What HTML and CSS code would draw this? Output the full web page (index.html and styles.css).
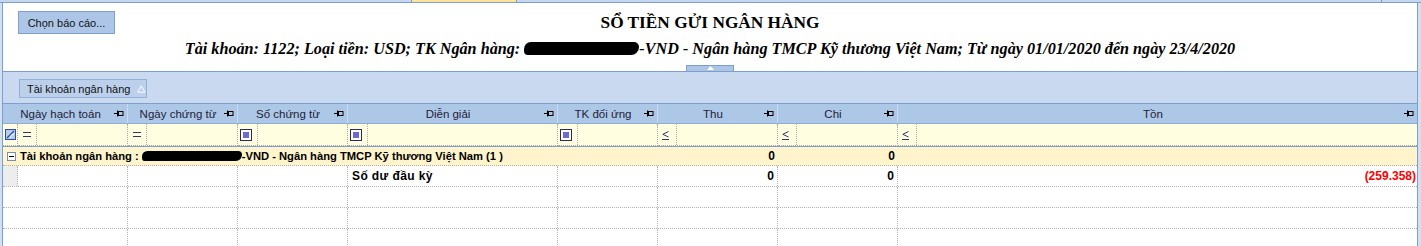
FILE: index.html
```html
<!DOCTYPE html>
<html lang="vi">
<head>
<meta charset="utf-8">
<title>Sổ tiền gửi ngân hàng</title>
<link rel="stylesheet" href="styles.css">
</head>
<body>
<div class="strip">
  <div class="strip-a"></div>
  <div class="strip-tab"></div>
  <div class="strip-b"></div>
  <div class="strip-c"></div>
</div>
<div class="frame">
  <header class="head">
    <div class="head-top">
      <div class="head-left"><button class="btn">Chọn báo cáo...</button></div>
      <h1 class="title">SỔ TIỀN GỬI NGÂN HÀNG</h1>
      <div></div>
    </div>
    <p class="subtitle">Tài khoản: 1122; Loại tiền: USD; TK Ngân hàng: <span class="redact r1"></span>-VND - Ngân hàng TMCP Kỹ thương Việt Nam; Từ ngày 01/01/2020 đến ngày 23/4/2020</p>
    <div class="collapse"><svg width="7" height="4" viewBox="0 0 7 4"><path d="M0 4L3.5 0L7 4Z" fill="#fff"/></svg></div>
  </header>

  <div class="panel">
    <div class="groupbox">Tài khoản ngân hàng <svg class="sorttri" width="9" height="8" viewBox="0 0 9 8"><path d="M4.5 0.8L8.3 7.3H0.7Z" fill="none" stroke="#fff" stroke-width="1"/></svg></div>
  </div>

  <div class="grid">
    <div class="row hdr">
      <div class="hc span2"><span class="ht">Ngày hạch toán</span><svg class="pin" width="10" height="7" viewBox="0 0 10 7"><path d="M0 3.5H3.5M3.5 0.5V6.5" stroke="#000" fill="none"/><rect x="4.5" y="1.5" width="4.5" height="4" stroke="#000" fill="none"/></svg></div>
      <div class="hc"><span class="ht">Ngày chứng từ</span><svg class="pin" width="10" height="7" viewBox="0 0 10 7"><path d="M0 3.5H3.5M3.5 0.5V6.5" stroke="#000" fill="none"/><rect x="4.5" y="1.5" width="4.5" height="4" stroke="#000" fill="none"/></svg></div>
      <div class="hc"><span class="ht">Số chứng từ</span><svg class="pin" width="10" height="7" viewBox="0 0 10 7"><path d="M0 3.5H3.5M3.5 0.5V6.5" stroke="#000" fill="none"/><rect x="4.5" y="1.5" width="4.5" height="4" stroke="#000" fill="none"/></svg></div>
      <div class="hc"><span class="ht">Diễn giải</span><svg class="pin" width="10" height="7" viewBox="0 0 10 7"><path d="M0 3.5H3.5M3.5 0.5V6.5" stroke="#000" fill="none"/><rect x="4.5" y="1.5" width="4.5" height="4" stroke="#000" fill="none"/></svg></div>
      <div class="hc"><span class="ht">TK đối ứng</span><svg class="pin" width="10" height="7" viewBox="0 0 10 7"><path d="M0 3.5H3.5M3.5 0.5V6.5" stroke="#000" fill="none"/><rect x="4.5" y="1.5" width="4.5" height="4" stroke="#000" fill="none"/></svg></div>
      <div class="hc"><span class="ht">Thu</span><svg class="pin" width="10" height="7" viewBox="0 0 10 7"><path d="M0 3.5H3.5M3.5 0.5V6.5" stroke="#000" fill="none"/><rect x="4.5" y="1.5" width="4.5" height="4" stroke="#000" fill="none"/></svg></div>
      <div class="hc"><span class="ht">Chi</span><svg class="pin" width="10" height="7" viewBox="0 0 10 7"><path d="M0 3.5H3.5M3.5 0.5V6.5" stroke="#000" fill="none"/><rect x="4.5" y="1.5" width="4.5" height="4" stroke="#000" fill="none"/></svg></div>
      <div class="hc last"><span class="ht">Tồn</span><svg class="pin" width="10" height="7" viewBox="0 0 10 7"><path d="M0 3.5H3.5M3.5 0.5V6.5" stroke="#000" fill="none"/><rect x="4.5" y="1.5" width="4.5" height="4" stroke="#000" fill="none"/></svg></div>
    </div>

    <div class="row filter">
      <div class="fc corner"><svg width="11" height="11" viewBox="0 0 11 11"><rect x="0.5" y="0.5" width="10" height="10" fill="#b7cdee" stroke="#2d4f9e"/><path d="M2 9L9 2" stroke="#2d4f9e" stroke-width="1.2"/><path d="M5 9Q6 5 9 5" stroke="#fff" fill="none" stroke-width="1"/></svg></div>
      <div class="fc"><span class="fi"><svg width="8" height="5" viewBox="0 0 8 5"><path d="M0 0.5H8M0 4.5H8" stroke="#33335f"/></svg></span></div>
      <div class="fc"><span class="fi"><svg width="8" height="5" viewBox="0 0 8 5"><path d="M0 0.5H8M0 4.5H8" stroke="#33335f"/></svg></span></div>
      <div class="fc"><span class="fi"><svg width="12" height="12" viewBox="0 0 12 12"><rect x="0.5" y="0.5" width="11" height="11" fill="#fff" stroke="#2b2b55"/><rect x="3" y="3" width="6" height="6" fill="#6b6bd6"/></svg></span></div>
      <div class="fc"><span class="fi"><svg width="12" height="12" viewBox="0 0 12 12"><rect x="0.5" y="0.5" width="11" height="11" fill="#fff" stroke="#2b2b55"/><rect x="3" y="3" width="6" height="6" fill="#6b6bd6"/></svg></span></div>
      <div class="fc"><span class="fi"><svg width="12" height="12" viewBox="0 0 12 12"><rect x="0.5" y="0.5" width="11" height="11" fill="#fff" stroke="#2b2b55"/><rect x="3" y="3" width="6" height="6" fill="#6b6bd6"/></svg></span></div>
      <div class="fc"><span class="fi"><svg width="7" height="9" viewBox="0 0 7 9"><path d="M6.5 0.5L0.8 3.3L6.5 6M0 8.5H7" stroke="#33335f" fill="none"/></svg></span></div>
      <div class="fc"><span class="fi"><svg width="7" height="9" viewBox="0 0 7 9"><path d="M6.5 0.5L0.8 3.3L6.5 6M0 8.5H7" stroke="#33335f" fill="none"/></svg></span></div>
      <div class="fc last"><span class="fi"><svg width="7" height="9" viewBox="0 0 7 9"><path d="M6.5 0.5L0.8 3.3L6.5 6M0 8.5H7" stroke="#33335f" fill="none"/></svg></span></div>
    </div>

    <div class="row grouprow">
      <div class="gexp"><svg width="9" height="9" viewBox="0 0 9 9"><rect x="0.5" y="0.5" width="8" height="8" fill="#fff" stroke="#7d8fb0"/><path d="M2 4.5H7" stroke="#000"/></svg></div>
      <div class="gtext">Tài khoản ngân hàng : <span class="redact r2"></span>-VND - Ngân hàng TMCP Kỹ thương Việt Nam (1 )</div>
      <div class="gnum thu">0</div>
      <div class="gnum chi">0</div>
      <div class="gfill"></div>
    </div>

    <div class="row data">
      <div class="dc ind"></div>
      <div class="dc"></div>
      <div class="dc"></div>
      <div class="dc"></div>
      <div class="dc txt">Số dư đầu kỳ</div>
      <div class="dc"></div>
      <div class="dc num">0</div>
      <div class="dc num">0</div>
      <div class="dc num neg last">(259.358)</div>
    </div>

    <div class="row data empty">
      <div class="dc blank"></div><div class="dc"></div><div class="dc"></div><div class="dc"></div><div class="dc"></div><div class="dc"></div><div class="dc"></div><div class="dc"></div><div class="dc last"></div>
    </div>
    <div class="row data empty">
      <div class="dc blank"></div><div class="dc"></div><div class="dc"></div><div class="dc"></div><div class="dc"></div><div class="dc"></div><div class="dc"></div><div class="dc"></div><div class="dc last"></div>
    </div>
    <div class="row data empty">
      <div class="dc blank"></div><div class="dc"></div><div class="dc"></div><div class="dc"></div><div class="dc"></div><div class="dc"></div><div class="dc"></div><div class="dc"></div><div class="dc last"></div>
    </div>
  </div>
</div>
</body>
</html>
```

FILE: styles.css
```css
* { box-sizing: border-box; }

html, body {
  margin: 0;
  padding: 0;
}

body {
  background: #d2e0f4;
  font-family: "Liberation Sans", Arial, sans-serif;
  font-size: 11px;
  color: #000;
  overflow: hidden;
}

/* top tab strip */
.strip {
  display: flex;
  height: 3px;
  border-bottom: 1px solid #7d9fcd;
  background: #c6d8f0;
}
.strip-a { width: 411px; }
.strip-tab {
  width: 106px;
  background: #ffe398;
  border-left: 1px solid #7d9fcd;
  border-right: 1px solid #7d9fcd;
}
.strip-b { flex: 1; border-right: 1px solid #7d9fcd; }
.strip-c { width: 39px; }

.frame {
  margin: 0 3px 0 2px;
  border-left: 1px solid #7d9fcd;
  border-right: 1px solid #7d9fcd;
  background: #fff;
}

/* report header */
.head {
  height: 69px;
  background: #fff;
  border-bottom: 1px solid #7d9fcd;
  display: flex;
  flex-direction: column;
  padding-top: 8px;
}
.head-top {
  display: grid;
  grid-template-columns: 1fr auto 1fr;
  align-items: center;
  height: 23px;
}
.head-left { padding-left: 15px; }
.btn {
  font-family: "Liberation Sans", Arial, sans-serif;
  font-size: 11px;
  color: #111;
  width: 97px;
  height: 23px;
  padding: 0;
  background: #adc6e8;
  border: 1px solid #7f9fcf;
  border-radius: 0;
  display: block;
}
.title {
  margin: 0;
  font-family: "Liberation Serif", "Times New Roman", serif;
  font-weight: bold;
  font-size: 17.3px;
  line-height: 23px;
  text-align: center;
  white-space: nowrap;
}
.subtitle {
  margin: 5px 0 0;
  font-family: "Liberation Serif", "Times New Roman", serif;
  font-weight: bold;
  font-style: italic;
  font-size: 16.2px;
  line-height: 20px;
  text-align: center;
  white-space: nowrap;
}
.redact {
  display: inline-block;
  background: #000;
  border-radius: 7px 5px 8px 4px;
  vertical-align: middle;
}
.r1 { width: 115px; height: 13px; margin-top: -3px; }
.r2 { width: 100px; height: 10px; margin-top: -2px; }

.collapse {
  margin-top: auto;
  align-self: center;
  width: 48px;
  height: 6px;
  background: #adc6e8;
  border: 1px solid #7d9fcd;
  border-bottom: 0;
  display: flex;
  justify-content: center;
  align-items: flex-start;
}
.collapse svg { display: block; }

/* group-by panel */
.panel {
  height: 32px;
  background: #c9daf0;
  border-bottom: 1px solid #7d9fcd;
  padding: 7px 0 0 16px;
}
.groupbox {
  display: inline-flex;
  align-items: center;
  height: 19px;
  width: 128px;
  padding: 0 0 0 7px;
  background: #bcd0ec;
  border: 1px solid #93b0d8;
  color: #111;
  font-size: 11px;
  white-space: nowrap;
}
.sorttri { margin-left: 7px; }

/* grid */
.grid { background: #fff; }
.row {
  display: grid;
  grid-template-columns: 15px 110px 110px 110px 210px 100px 120px 120px 1fr;
}

.hdr {
  height: 20px;
  background: #adc7e7;
  border-bottom: 1px solid #8fadd6;
  font-size: 11.5px;
}
.hc {
  display: flex;
  align-items: center;
  border-right: 1px solid #cbdaf0;
  color: #1d1d38;
  padding-right: 3px;
}
.hc.last { border-right: 0; }
.hc.span2 { grid-column: span 2; }
.ht {
  flex: 1;
  text-align: center;
  padding-left: 4px;
  white-space: nowrap;
}
.pin { display: block; flex: none; }

.filter {
  height: 23px;
  background: #fffee1;
  border-bottom: 1px solid #7d9fcd;
}
.fc {
  display: flex;
  align-items: center;
  border-right: 1px dotted #a8a8a8;
  border-bottom: 1px dotted #a8a8a8;
}
.fc.last { border-right: 0; }
.fc.corner { justify-content: center; padding-left: 1px; }
.fi {
  width: 19px;
  height: 100%;
  display: flex;
  align-items: center;
  padding-left: 5px;
  border-right: 1px dotted #a8a8a8;
}
.fc .fi svg { display: block; }
.fc:nth-child(4) .fi, .fc:nth-child(5) .fi, .fc:nth-child(6) .fi { padding-left: 2px; width: 20px; }
.fc:nth-child(7) .fi, .fc:nth-child(8) .fi, .fc:nth-child(9) .fi { padding-left: 4px; padding-top: 1px; }

.grouprow {
  height: 19px;
  background: #fff4cc;
  border-bottom: 1px dotted #b0b0b0;
  font-weight: bold;
  font-size: 11.2px;
}
.gexp {
  display: flex;
  align-items: center;
  justify-content: center;
  padding-left: 1px;
}
.gexp svg { display: block; }
.gtext {
  grid-column: 2 / 7;
  display: flex;
  align-items: center;
  white-space: nowrap;
  padding-left: 2px;
}
.gtext .redact { margin: 0 0 0 3px; }
.gnum {
  display: flex;
  align-items: center;
  justify-content: flex-end;
  padding-right: 3px;
  font-size: 12px;
}

.data {
  height: 21px;
  border-bottom: 1px dotted #b4b4b4;
  font-weight: bold;
  font-size: 12px;
}
.dc {
  display: flex;
  align-items: center;
  border-right: 1px dotted #b4b4b4;
  white-space: nowrap;
}
.dc.last { border-right: 0; }
.dc.ind { background: #ededed; }
.dc.blank { border-right: 0; }
.dc.txt { padding-left: 4px; letter-spacing: 0.4px; }
.dc.num { justify-content: flex-end; padding-right: 3px; }
.dc.neg { color: #ff0000; padding-right: 1px; }
```
